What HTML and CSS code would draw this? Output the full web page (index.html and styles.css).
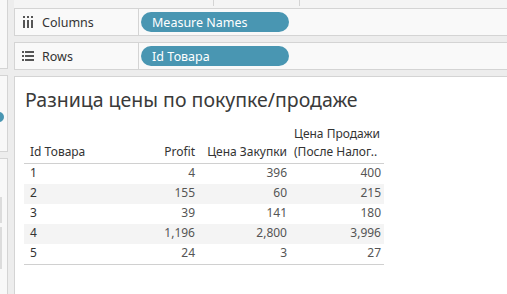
FILE: index.html
```html
<!DOCTYPE html>
<html>
<head>
    <title>Разница цены</title>
    <link rel="stylesheet" href="styles.css">
</head>
<body>
<div class="app">
    <div class="side">
        <div class="side-card side-top"></div>
        <div class="side-card side-mid"><span class="dot"></span></div>
        <div class="side-card side-low"><span class="bar"></span><span class="bar bar-2"></span></div>
    </div>
    <div class="main">
        <div class="topbar"><span class="tick tick-1"></span><span class="tick tick-2"></span></div>
        <div class="shelf">
            <div class="shelf-label">
                <svg class="shelf-icon" width="12" height="12" viewBox="0 0 12 12">
                    <rect x="1" y="0" width="2" height="2" fill="#555"/>
                    <rect x="5" y="0" width="2" height="2" fill="#555"/>
                    <rect x="9" y="0" width="2" height="2" fill="#555"/>
                    <rect x="1" y="4" width="2" height="8" fill="#555"/>
                    <rect x="5" y="4" width="2" height="8" fill="#555"/>
                    <rect x="9" y="4" width="2" height="8" fill="#555"/>
                </svg>
                Columns
            </div>
            <div class="pill">Measure Names</div>
        </div>
        <div class="shelf">
            <div class="shelf-label">
                <svg class="shelf-icon" width="12" height="12" viewBox="0 0 12 12">
                    <rect x="0" y="1" width="2" height="2" fill="#555"/>
                    <rect x="0" y="5" width="2" height="2" fill="#555"/>
                    <rect x="0" y="9" width="2" height="2" fill="#555"/>
                    <rect x="3" y="1" width="9" height="2" fill="#555"/>
                    <rect x="3" y="5" width="9" height="2" fill="#555"/>
                    <rect x="3" y="9" width="9" height="2" fill="#555"/>
                </svg>
                Rows
            </div>
            <div class="pill">Id Товара</div>
        </div>
        <div class="view">
            <div class="title">Разница цены по покупке/продаже</div>
            <table class="grid">
                <thead>
                    <tr>
                        <th class="c-id">Id Товара</th>
                        <th class="c-num c-profit">Profit</th>
                        <th class="c-num c-buy">Цена Закупки</th>
                        <th class="c-sell">Цена Продажи<br>(После Налог..</th>
                    </tr>
                </thead>
                <tbody>
                    <tr><td>1</td><td class="c-num">4</td><td class="c-num">396</td><td class="c-num">400</td></tr>
                    <tr class="odd"><td>2</td><td class="c-num">155</td><td class="c-num">60</td><td class="c-num">215</td></tr>
                    <tr><td>3</td><td class="c-num">39</td><td class="c-num">141</td><td class="c-num">180</td></tr>
                    <tr class="odd"><td>4</td><td class="c-num">1,196</td><td class="c-num">2,800</td><td class="c-num">3,996</td></tr>
                    <tr><td>5</td><td class="c-num">24</td><td class="c-num">3</td><td class="c-num">27</td></tr>
                </tbody>
            </table>
        </div>
    </div>
</div>
</body>
</html>
```

FILE: styles.css
```css
html, body {
    width: 100%;
    height: 100%;
    padding: 0px;
    margin: 0px;
    overflow: hidden;
}

body {
    background-color: #ededed;
    font-family: "Noto Sans", "Open Sans", sans-serif;
    color: #333;
}

.app {
    display: flex;
    height: 294px;
    gap: 6px;
}

/* left strip of cut-off panels */
.side {
    width: 8px;
    display: flex;
    flex-direction: column;
    gap: 6px;
}

.side-card {
    position: relative;
    background-color: #f8f8f8;
    border: 1px solid #d4d4d4;
    border-left: none;
    overflow: hidden;
}

.side-top {
    height: 68px;
    border-top: none;
}

.side-mid {
    height: 75px;
}

.side-low {
    flex: 1;
    border-bottom: none;
}

.dot {
    position: absolute;
    left: -6px;
    top: 36px;
    width: 10px;
    height: 10px;
    border-radius: 50%;
    background-color: #4996b2;
}

.bar {
    position: absolute;
    left: 0px;
    top: 38px;
    width: 2px;
    height: 26px;
    background-color: #dcdcdc;
}

.bar-2 {
    top: 68px;
    height: 42px;
}

/* main column */
.main {
    flex: 1;
    display: flex;
    flex-direction: column;
    min-width: 0;
}

.topbar {
    position: relative;
    height: 8px;
    background-color: #f4f4f4;
}

.tick {
    position: absolute;
    top: 0px;
    width: 1px;
    height: 6px;
    background-color: #d4d4d4;
}

.tick-1 {
    left: 199px;
}

.tick-2 {
    left: 285px;
}

.shelf {
    display: flex;
    align-items: center;
    height: 26px;
    margin-bottom: 6px;
    background-color: #f9f9f9;
    border: 1px solid #d4d4d4;
    border-right: none;
}

.shelf-label {
    display: flex;
    align-items: center;
    width: 124px;
    height: 100%;
    padding-left: 7px;
    box-sizing: border-box;
    border-right: 1px solid #d4d4d4;
    font-size: 12.5px;
    color: #333;
}

.shelf-icon {
    margin-right: 8px;
}

.pill {
    display: flex;
    align-items: center;
    width: 137px;
    height: 20px;
    margin-left: 2px;
    padding-left: 11px;
    border-radius: 10px;
    background-color: #4996b2;
    color: #fff;
    font-size: 12.5px;
}

.view {
    flex: 1;
    background-color: #fff;
    border: 1px solid #d4d4d4;
    border-right: none;
    border-bottom: none;
}

.title {
    padding: 10px 0px 0px 10px;
    font-size: 19.5px;
    color: #3a3a3a;
    line-height: 26px;
}

.grid {
    margin: 12px 0px 0px 9px;
    border-collapse: collapse;
    font-size: 12px;
    border-bottom: 1px solid #d0d0d0;
}

.grid th {
    font-weight: normal;
    color: #333;
    vertical-align: bottom;
    line-height: 18px;
    padding: 0px 3px 2px 6px;
    text-align: right;
    border-bottom: 1px solid #d0d0d0;
    white-space: nowrap;
}

.grid th.c-id {
    text-align: left;
    width: 119px;
}

.grid th.c-profit {
    width: 37px;
}

.grid th.c-buy {
    width: 83px;
}

.grid th.c-sell {
    text-align: left;
    padding-left: 4px;
    width: 87px;
}

.grid td {
    height: 20px;
    padding: 0px 3px 0px 6px;
    line-height: 18px;
    vertical-align: top;
    color: #333;
}

.grid td.c-num {
    text-align: right;
    color: #555;
}

.grid tr.odd td {
    background-color: #f4f4f4;
}
```
